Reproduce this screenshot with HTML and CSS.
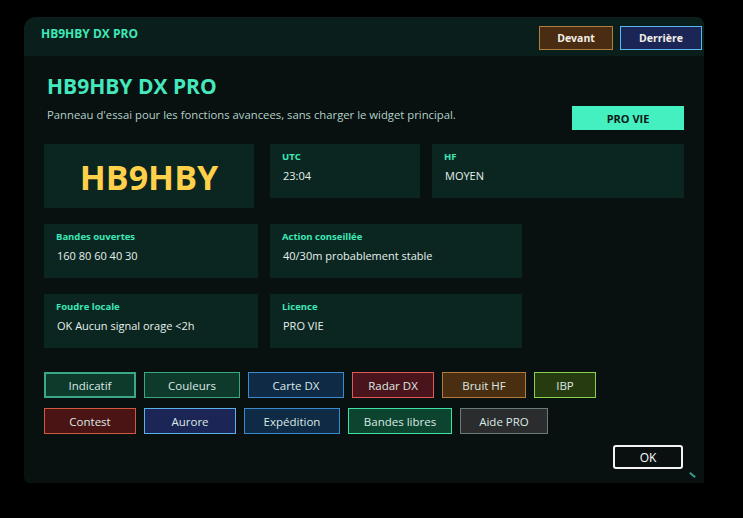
FILE: index.html
```html
<!DOCTYPE html>
<html lang="fr">
<head>
  <meta charset="UTF-8">
  <meta name="viewport" content="width=device-width, initial-scale=1.0">
  <title>HB9HBY DX PRO</title>
  <link rel="stylesheet" href="styles.css">
</head>
<body>

  <div class="window">
    <div class="titlebar">
      <span class="title">HB9HBY DX PRO</span>
      <div class="title-buttons">
        <button class="tb-btn tb-front">Devant</button>
        <button class="tb-btn tb-back">Derrière</button>
      </div>
    </div>

    <div class="content">
      <div class="header">
        <div class="header-text">
          <h1>HB9HBY DX PRO</h1>
          <p>Panneau d'essai pour les fonctions avancees, sans charger le widget principal.</p>
        </div>
        <button class="pro-btn">PRO VIE</button>
      </div>

      <div class="row row-top">
        <div class="card call-card">HB9HBY</div>
        <div class="card card-utc">
          <div class="label">UTC</div>
          <div class="value">23:04</div>
        </div>
        <div class="card card-hf">
          <div class="label">HF</div>
          <div class="value">MOYEN</div>
        </div>
      </div>

      <div class="row">
        <div class="card card-left">
          <div class="label">Bandes ouvertes</div>
          <div class="value">160 80 60 40 30</div>
        </div>
        <div class="card card-wide">
          <div class="label">Action conseillée</div>
          <div class="value">40/30m probablement stable</div>
        </div>
      </div>

      <div class="row">
        <div class="card card-left">
          <div class="label">Foudre locale</div>
          <div class="value">OK Aucun signal orage &lt;2h</div>
        </div>
        <div class="card card-wide">
          <div class="label">Licence</div>
          <div class="value">PRO VIE</div>
        </div>
      </div>

      <!-- tool buttons -->
      <div class="tools">
        <div class="tool-row">
          <button class="tool t-indicatif">Indicatif</button>
          <button class="tool t-couleurs">Couleurs</button>
          <button class="tool t-carte">Carte DX</button>
          <button class="tool t-radar">Radar DX</button>
          <button class="tool t-bruit">Bruit HF</button>
          <button class="tool t-ibp">IBP</button>
        </div>
        <div class="tool-row">
          <button class="tool t-contest">Contest</button>
          <button class="tool t-aurore">Aurore</button>
          <button class="tool t-expedition">Expédition</button>
          <button class="tool t-libres">Bandes libres</button>
          <button class="tool t-aide">Aide PRO</button>
        </div>
      </div>

      <div class="footer">
        <button class="ok-btn">OK</button>
      </div>
    </div>
    <span class="grip"></span>
  </div>

</body>
</html>
```

FILE: styles.css
```css
body {
  margin: 0;
  background: #000;
  font-family: "Open Sans", "Noto Sans", sans-serif;
  height: 518px;
  overflow: hidden;
}

button {
  font-family: inherit;
  cursor: pointer;
}

.window {
  position: relative;
  margin: 17px 0 0 24px;
  width: 680px;
  height: 466px;
  background: #081010;
  border-radius: 12px 8px 0 6px;
  overflow: hidden;
}

.titlebar {
  display: flex;
  justify-content: space-between;
  align-items: flex-start;
  height: 39px;
  padding: 0 2px 0 17px;
  background: #0a1f1b;
}

.title {
  margin-top: 8px;
  color: #3ee8b8;
  font-size: 12px;
  font-weight: 700;
}

.title-buttons {
  display: flex;
  gap: 7px;
  margin-top: 9px;
}

.tb-btn {
  height: 24px;
  padding: 0;
  color: #f4f0e8;
  font-size: 10.5px;
  font-weight: 700;
  border: 1px solid;
}

.tb-front {
  width: 74px;
  background: #4a2c12;
  border-color: #b08040;
}

.tb-back {
  width: 82px;
  background: #1c2656;
  border-color: #5ab8f0;
}

.content {
  padding: 0 20px;
}

.header {
  display: flex;
  justify-content: space-between;
  align-items: flex-start;
  padding-left: 3px;
  margin-top: 15px;
}

h1 {
  margin: 0;
  color: #44e8bc;
  font-size: 21px;
  font-weight: 700;
  line-height: 30px;
}

.header-text p {
  margin: 6px 0 0;
  color: #b4d0c8;
  font-size: 11.3px;
  line-height: 16px;
}

.pro-btn {
  width: 112px;
  height: 24px;
  padding: 0;
  margin-top: 35px;
  background: #44f0c0;
  color: #0a1a16;
  border: none;
  font-size: 11px;
  font-weight: 700;
}

.row {
  display: flex;
  gap: 12px;
  margin-top: 16px;
}

.row-top {
  align-items: flex-start;
  margin-top: 14px;
}

.card {
  box-sizing: border-box;
  height: 54px;
  padding: 6px 12px 0;
  background: #0b2620;
}

.call-card {
  width: 210px;
  height: 64px;
  margin-right: 4px;
  display: flex;
  align-items: center;
  justify-content: center;
  padding: 2px 0 0;
  color: #ffd04a;
  font-size: 34px;
  font-weight: 700;
}

.card-utc {
  width: 150px;
}

.card-hf {
  width: 252px;
}

.card-left {
  width: 214px;
}

.card-wide {
  width: 252px;
}

.label {
  color: #3ee8b8;
  font-size: 9.5px;
  font-weight: 700;
  line-height: 14px;
}

.value {
  margin-top: 4px;
  padding-left: 1px;
  color: #e6f0ec;
  font-size: 11px;
  line-height: 16px;
}

.tools {
  display: flex;
  flex-direction: column;
  gap: 10px;
  margin-top: 24px;
}

.tool-row {
  display: flex;
  gap: 8px;
}

.tool {
  box-sizing: border-box;
  height: 26px;
  padding: 0;
  color: #dce8e4;
  font-size: 11.5px;
  border: 1px solid;
}

.t-indicatif { width: 92px; background: #0e3a2c; border: 2px solid #3aa888; }
.t-couleurs { width: 96px; background: #0e3a2c; border-color: #3aa880; }
.t-carte { width: 96px; background: #0e2a44; border-color: #3a8ad0; }
.t-radar { width: 82px; background: #4a141c; border-color: #e05a5a; }
.t-bruit { width: 84px; background: #4a2e12; border-color: #b07a3a; }
.t-ibp { width: 62px; background: #263c10; border-color: #8ad050; }
.t-contest { width: 92px; background: #4a1414; border-color: #d05a40; }
.t-aurore { width: 92px; background: #1c2656; border-color: #5ab0e8; }
.t-expedition { width: 96px; background: #0e2a44; border-color: #3a8ad0; }
.t-libres { width: 104px; background: #0c4430; border-color: #40e0a8; }
.t-aide { width: 88px; background: #2a2c2e; border-color: #6a7a78; }

.footer {
  display: flex;
  justify-content: flex-end;
  margin-top: 11px;
  padding-right: 1px;
}

.ok-btn {
  width: 70px;
  height: 24px;
  padding: 0;
  background: #0a1010;
  color: #fff;
  border: 2px solid #f4f4f4;
  border-radius: 3px;
  font-size: 12px;
}

/* resize grip */
.grip {
  position: absolute;
  right: 8px;
  bottom: 7px;
  width: 7px;
  height: 2px;
  background: #3a9a8a;
  transform: rotate(40deg);
}
```
